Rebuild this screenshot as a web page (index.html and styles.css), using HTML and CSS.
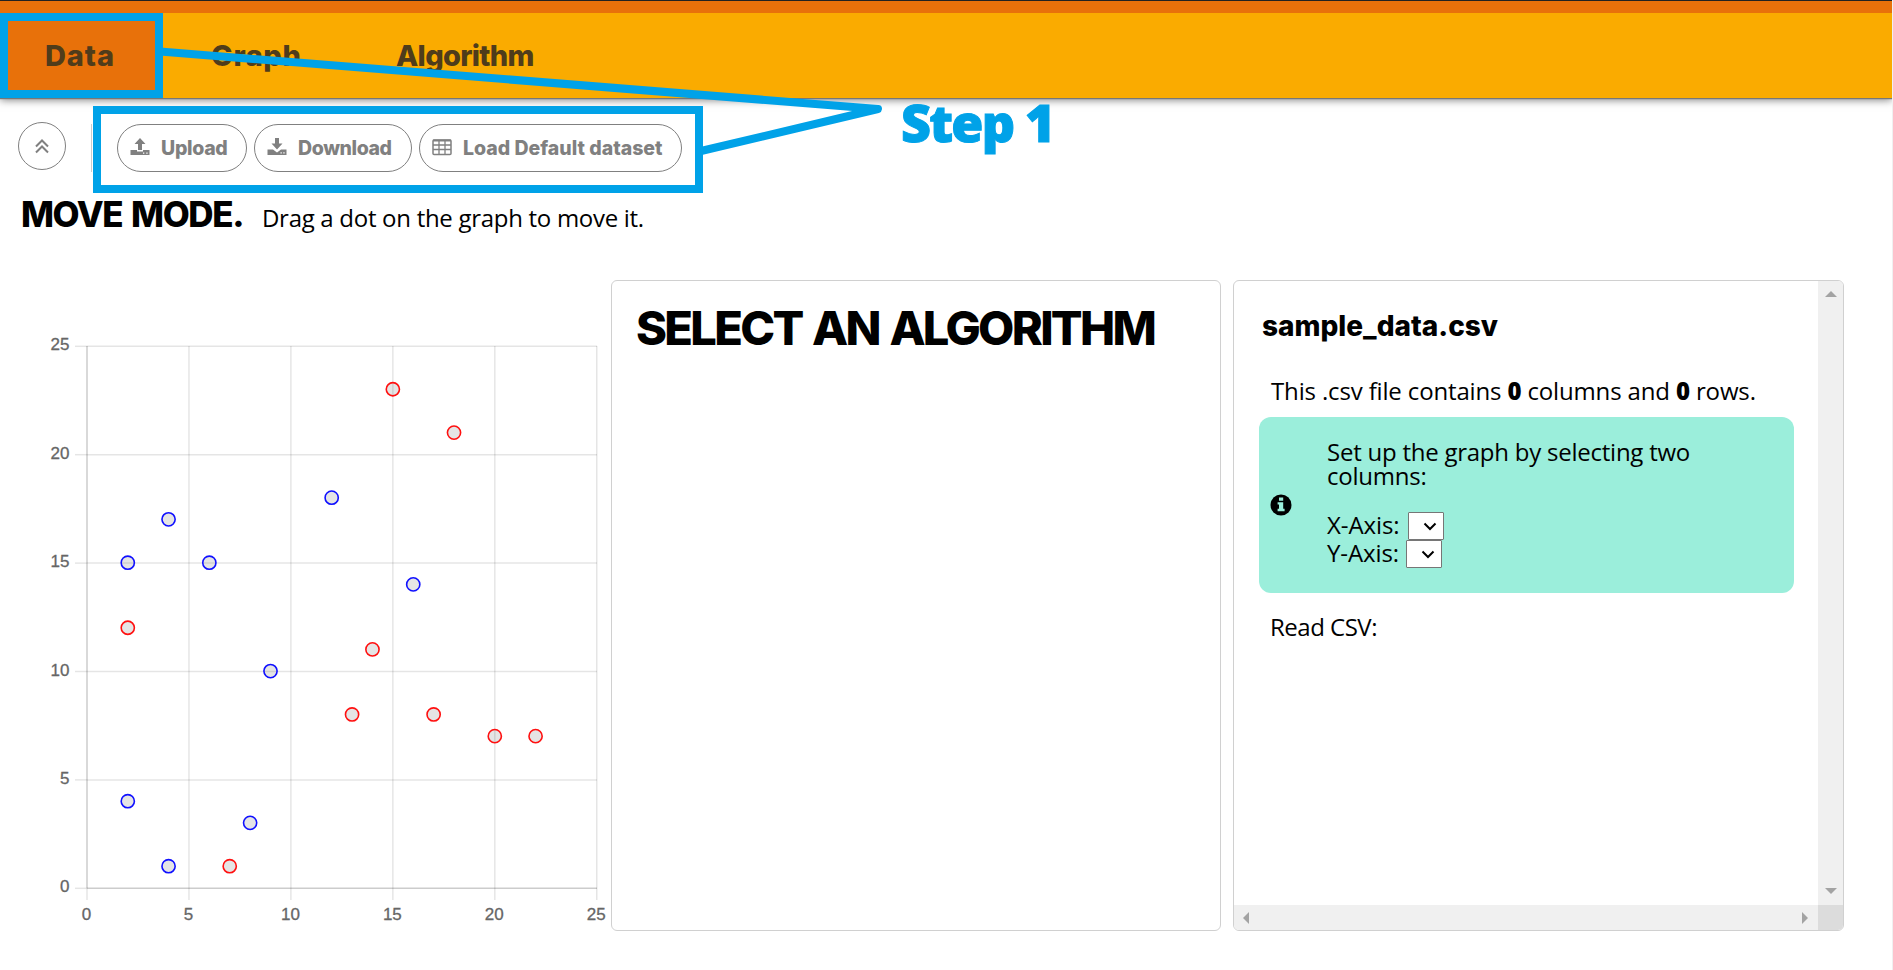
FILE: index.html
```html
<!DOCTYPE html>
<html lang="en">
<head>
<meta charset="utf-8">
<title>Data</title>
<link rel="stylesheet" href="styles.css">
</head>
<body>
<header class="header">
  <nav class="tabs">
    <a class="tab tab-active">Data</a>
    <a class="tab tab-graph">Graph</a>
    <a class="tab tab-algo">Algorithm</a>
  </nav>
</header>

<div class="toolbar">
  <button class="collapse" aria-label="Collapse">
    <svg width="14" height="16" viewBox="0 0 14 16" fill="none" stroke="#808080" stroke-width="2"><path d="M1 8.500 7 2.500l6 6M1 14.500l6-6 6 6"/></svg>
  </button>
  <div class="divider"></div>
  <div class="buttons">
    <button class="pill pill-upload">
      <svg width="20" height="18" viewBox="0 0 20 18" fill="#808080"><path d="M10 0 4.500 6H8v6h4V6h3.500z"/><path fill-rule="evenodd" d="M0.500 12H7v1.500h6V12h6.500v5H.5zM13 14.500v1.300h1.300v-1.300zM16.300 14.500v1.300h1.300v-1.300z"/></svg>
      <span>Upload</span>
    </button>
    <button class="pill pill-download">
      <svg width="20" height="18" viewBox="0 0 20 18" fill="#808080"><path d="M8 0h4v5.500h3.500L10 11.500 4.500 5.500H8z"/><path fill-rule="evenodd" d="M.5 11.500H6l4 3 4-3h5.500V17H.5zM13.500 14.200v1.300h1.300v-1.300zM16.300 14.200v1.300h1.300v-1.300z"/></svg>
      <span>Download</span>
    </button>
    <button class="pill pill-load">
      <svg width="20" height="18" viewBox="0 0 20 18" fill="none" stroke="#808080"><rect x="1" y="2" width="18" height="14.500" rx="1" stroke-width="1.500"/><path stroke-width="2" d="M1 2.500h18"/><path stroke-width="1.300" d="M1 7h18M1 11.500h18M7 2v14M13 2v14"/></svg>
      <span>Load Default dataset</span>
    </button>
  </div>
</div>

<div class="mode">
  <h2 class="mode-title">MOVE MODE.</h2>
  <p class="mode-text">Drag a dot on the graph to move it.</p>
</div>

<main class="main">
  <svg class="chart" width="611" height="651" viewBox="0 280 611 651" id="chart"></svg>
  <section class="panel">
    <h1 class="panel-title">SELECT AN ALGORITHM</h1>
  </section>
  <section class="panel data-panel">
    <div class="data-body">
      <h3 class="file-name">sample_data.csv</h3>
      <p class="summary">This .csv file contains <b>0</b> columns and <b>0</b> rows.</p>
      <div class="info">
        <svg class="info-icon" width="22" height="22" viewBox="0 0 22 22"><circle cx="11" cy="11" r="10.500" fill="#000"/><path fill="#9beedb" d="M9 3.500h4.200v3.300H9zM7.600 8.200h5.600v6.600h1.400v2.400H7.600v-2.400H9v-4.200H7.600z"/></svg>
        <div class="info-text">
          <p class="setup">Set up the graph by selecting two<br>columns:</p>
          <div class="axis"><label>X-Axis:</label><span class="select"><svg width="14" height="9" viewBox="0 0 14 9"><path d="M1.500 1.500 7 7l5.500-5.500" fill="none" stroke="#000" stroke-width="2"/></svg></span></div>
          <div class="axis axis-y"><label>Y-Axis:</label><span class="select"><svg width="14" height="9" viewBox="0 0 14 9"><path d="M1.500 1.500 7 7l5.500-5.500" fill="none" stroke="#000" stroke-width="2"/></svg></span></div>
        </div>
      </div>
      <p class="read">Read CSV:</p>
    </div>
    <div class="vbar">
      <svg width="12" height="6" viewBox="0 0 12 6"><path d="M6 0l6 6H0z" fill="#a3a3a3"/></svg>
      <svg width="12" height="6" viewBox="0 0 12 6"><path d="M0 0h12L6 6z" fill="#a3a3a3"/></svg>
    </div>
    <div class="hbar">
      <svg width="6" height="12" viewBox="0 0 6 12"><path d="M6 0v12L0 6z" fill="#a3a3a3"/></svg>
      <svg width="6" height="12" viewBox="0 0 6 12"><path d="M0 0l6 6-6 6z" fill="#a3a3a3"/></svg>
    </div>
    <div class="corner"></div>
  </section>
</main>

<svg class="notes" width="1893" height="220" viewBox="0 0 1893 220" fill="none" stroke="#00a2e8" stroke-width="8">
  <rect x="4" y="17" width="155" height="77"/>
  <rect x="97" y="110" width="602" height="79"/>
  <path d="M160 51.500 878 109 701 151" stroke-linejoin="round"/>
</svg>
<div class="step">Step 1</div>
<script src="chart.js"></script>
</body>
</html>
```
FILE: styles.css
```css
* { box-sizing: border-box; }
body {
  margin: 0;
  height: 970px;
  overflow: hidden;
  position: relative;
  background: #fff;
  color: #000;
  font-family: "Open Sans", sans-serif;
  border-right: 1px solid #f0f0f0;
}
h1, h2, h3, p { margin: 0; }
button { background: none; font: inherit; padding: 0; }

.header {
  height: 98px;
  background: #faab00;
  border-top: 1px solid #222;
  box-shadow: 0 1px 1px #777, 0 2px 8px rgba(0, 0, 0, .5);
}
.tabs {
  display: flex;
  height: 97px;
  border-top: 12px solid #e8710a;
}
.tab {
  height: 85px;
  font: 800 29px/85px Inter, sans-serif;
  color: #4f3c1b;
}
.tab-active { width: 163px; padding-left: 45px; background: #e8710a; letter-spacing: .9px; }
.tab-graph { width: 186px; padding-left: 48px; letter-spacing: .6px; }
.tab-algo { padding-left: 47px; letter-spacing: -.7px; }

.toolbar {
  display: flex;
  height: 95px;
  padding: 24px 0 0 18px;
}
.collapse {
  width: 48px;
  height: 48px;
  border: 1px solid #808080;
  border-radius: 50%;
  display: flex;
  align-items: center;
  justify-content: center;
}
.divider { width: 1px; height: 48px; margin: 2px 0 0 25px; background: #ccc; }
.buttons { display: flex; gap: 7px; padding: 2px 0 0 25px; }
.pill {
  height: 48px;
  display: flex;
  align-items: center;
  gap: 11px;
  padding-left: 12px;
  border: 1px solid #808080;
  border-radius: 24px;
  font: 800 19.500px/46px Inter, sans-serif;
  color: #808080;
  white-space: nowrap;
}
.pill-upload { width: 130px; letter-spacing: -.3px; }
.pill-download { width: 158px; letter-spacing: -.4px; }
.pill-load { width: 263px; letter-spacing: 0; }
.pill svg { margin-top: -2px; }

.mode {
  display: flex;
  align-items: baseline;
  height: 87px;
  padding-left: 21px;
}
.mode-title {
  width: 241px;
  font: 800 35px/42px Inter, sans-serif;
  letter-spacing: -1.400px;
  word-spacing: 2.500px;
  white-space: nowrap;
}
.mode-text { font-size: 24px; line-height: 40px; letter-spacing: -.290px; }

.main { display: flex; height: 651px; }
.chart { flex: none; font: 17px "Liberation Sans", Arial, sans-serif; }
.panel {
  flex: none;
  width: 610px;
  height: 651px;
  border: 1px solid #d0d0d0;
  border-radius: 6px;
}
.panel-title {
  padding: 23px 0 0 24px;
  font: 800 47px/47px Inter, sans-serif;
  letter-spacing: -2.700px;
  word-spacing: 3px;
  white-space: nowrap;
}
.data-panel {
  width: 611px;
  margin-left: 12px;
  display: grid;
  grid-template: 624px 25px / 584px 25px;
  overflow: hidden;
}
.data-body { padding: 27px 24px 0 25px; overflow: hidden; }
.file-name { padding-left: 3px; font: 800 28px/36px Inter, sans-serif; }
.summary {
  margin-top: 29px;
  padding-left: 12px;
  font-size: 24px;
  line-height: 36px;
  letter-spacing: -.150px;
  white-space: nowrap;
}
.summary b { font-weight: 800; }
.info {
  display: flex;
  height: 176px;
  margin-top: 8px;
  padding-left: 12px;
  border-radius: 12px;
  background: #9beedb;
}
.info-icon { flex: none; margin: 77px 0 0 -1px; }
.info-text { padding: 23px 0 0 35px; font-size: 24px; }
.setup { line-height: 24px; letter-spacing: -.240px; white-space: nowrap; }
.axis { display: flex; height: 28px; line-height: 26px; letter-spacing: -.100px; }
.axis label { width: 81px; }
.setup + .axis { margin-top: 24px; }
.axis-y label { width: 79px; }
.select {
  width: 36px;
  height: 28px;
  padding-right: 6px;
  display: flex;
  align-items: center;
  justify-content: flex-end;
  background: #fff;
  border: 1px solid #767676;
  border-radius: 1px;
}
.read { margin-top: 16px; padding-left: 11px; font-size: 24px; line-height: 36px; letter-spacing: -.500px; }
.vbar, .hbar {
  display: flex;
  justify-content: space-between;
  align-items: center;
  background: #f0f0f0;
}
.vbar { flex-direction: column; padding: 10px 0 11px; }
.hbar { padding: 0 10px 0 9px; }
.corner { background: #dcdcdc; }

.notes { position: absolute; left: 0; top: 0; }
.step {
  position: absolute;
  left: 901px;
  top: 87px;
  font: 800 52px/70px "Open Sans", sans-serif;
  letter-spacing: -1.800px;
  color: #00a2e8;
  -webkit-text-stroke: 1px #00a2e8;
  white-space: nowrap;
}
```
FILE: chart.js
```js
const red = [[15, 23], [18, 21], [2, 12], [14, 11], [13, 8], [17, 8], [20, 7], [22, 7], [7, 1]];
const blue = [[12, 18], [4, 17], [2, 15], [6, 15], [16, 14], [9, 10], [2, 4], [8, 3], [4, 1]];
const X = v => 87 + v * 20.39;
const Y = v => 888.3 - v * 21.68;
let out = '';
for (let v = 0; v <= 25; v += 5) {
  const x = X(v), y = Y(v);
  const c = v ? 'rgba(0,0,0,.1)' : 'rgba(0,0,0,.2)';
  const w = 1.5;
  out += `<path d="M${x} 346V888" stroke="${c}" stroke-width="${w}"/>`;
  out += `<path d="M${x} 888V900" stroke="rgba(0,0,0,.1)" stroke-width="${w}"/>`;
  out += `<path d="M87 ${y}H597" stroke="${c}" stroke-width="${w}"/>`;
  out += `<path d="M75 ${y}H87" stroke="rgba(0,0,0,.1)" stroke-width="${w}"/>`;
  out += `<text x="69.5" y="${y + 4}" text-anchor="end" fill="#666" stroke="#666" stroke-width=".3">${v}</text>`;
  out += `<text x="${x - .5}" y="920" text-anchor="middle" fill="#666" stroke="#666" stroke-width=".3">${v}</text>`;
}
for (const [set, color] of [[red, '#ff1010'], [blue, '#1010ff']])
  for (const [a, b] of set)
    out += `<circle cx="${X(a)}" cy="${Y(b) - .4}" r="6.6" fill="rgba(0,0,0,.1)" stroke="${color}" stroke-width="1.6"/>`;
document.getElementById('chart').innerHTML = out;
```
